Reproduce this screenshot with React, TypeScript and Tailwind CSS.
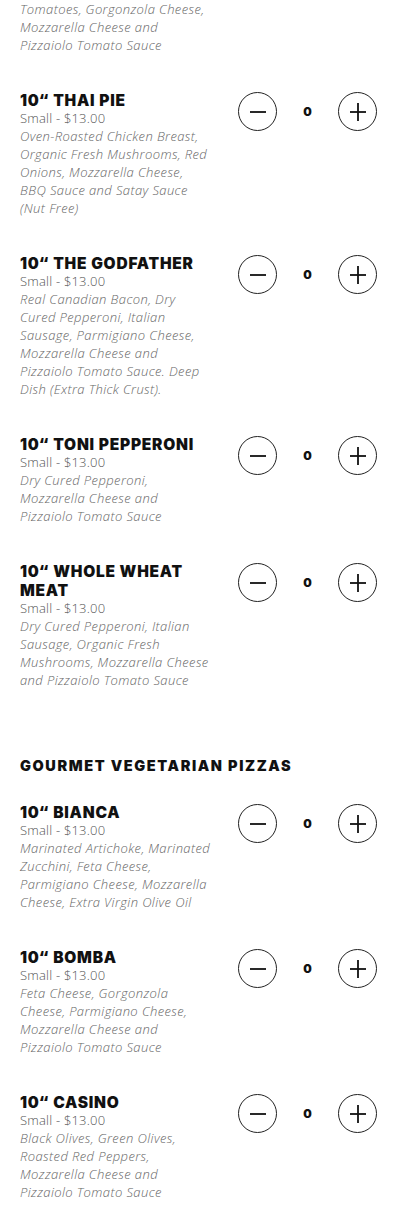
import { useState } from "react";

type Pizza = { name: string; desc: string };

const meat: Pizza[] = [
  {
    name: "10“ THAI PIE",
    desc: "Oven-Roasted Chicken Breast, Organic Fresh Mushrooms, Red Onions, Mozzarella Cheese, BBQ Sauce and Satay Sauce (Nut Free)",
  },
  {
    name: "10“ THE GODFATHER",
    desc: "Real Canadian Bacon, Dry Cured Pepperoni, Italian Sausage, Parmigiano Cheese, Mozzarella Cheese and Pizzaiolo Tomato Sauce. Deep Dish (Extra Thick Crust).",
  },
  {
    name: "10“ TONI PEPPERONI",
    desc: "Dry Cured Pepperoni, Mozzarella Cheese and Pizzaiolo Tomato Sauce",
  },
  {
    name: "10“ WHOLE WHEAT MEAT",
    desc: "Dry Cured Pepperoni, Italian Sausage, Organic Fresh Mushrooms, Mozzarella Cheese and Pizzaiolo Tomato Sauce",
  },
];

const veggie: Pizza[] = [
  {
    name: "10“ BIANCA",
    desc: "Marinated Artichoke, Marinated Zucchini, Feta Cheese, Parmigiano Cheese, Mozzarella Cheese, Extra Virgin Olive Oil",
  },
  {
    name: "10“ BOMBA",
    desc: "Feta Cheese, Gorgonzola Cheese, Parmigiano Cheese, Mozzarella Cheese and Pizzaiolo Tomato Sauce",
  },
  {
    name: "10“ CASINO",
    desc: "Black Olives, Green Olives, Roasted Red Peppers, Mozzarella Cheese and Pizzaiolo Tomato Sauce",
  },
];

function RoundButton({ kind, onClick }: { kind: "minus" | "plus"; onClick: () => void }) {
  return (
    <button
      onClick={onClick}
      className="w-[39px] h-[39px] shrink-0 rounded-full border-[1.3px] border-[#222] flex items-center justify-center"
    >
      <svg width="20" height="20" viewBox="0 0 20 20" fill="none" stroke="#111" strokeWidth="1.8">
        <path d="M2 10h16" />
        {kind === "plus" && <path d="M10 1v18" />}
      </svg>
    </button>
  );
}

function PizzaRow({ pizza }: { pizza: Pizza }) {
  const [qty, setQty] = useState(0);

  return (
    <div className="flex items-start pb-[37px]">
      <div className="w-[218px] shrink-0">
        <h3 className="max-w-[195px] font-['Inter',sans-serif] text-[15.5px] leading-[19px] font-black tracking-[0.05em] text-[#111]">
          {pizza.name}
        </h3>
        <p className="text-[13px] leading-[17px] font-light tracking-[0.2px] text-[#555]">Small - $13.00</p>
        <p className="max-w-[192px] text-[13px] leading-[18px] italic font-light tracking-[0.4px] text-[#666]">
          {pizza.desc}
        </p>
      </div>
      <div className="flex items-center mt-px">
        <RoundButton kind="minus" onClick={() => setQty((q) => Math.max(0, q - 1))} />
        <span className="w-[61px] text-center font-['Inter',sans-serif] text-[12px] font-black text-[#111]">{qty}</span>
        <RoundButton kind="plus" onClick={() => setQty((q) => q + 1)} />
      </div>
    </div>
  );
}

export default function App() {
  return (
    <div className="min-h-screen bg-white pl-5 font-['Open_Sans','Liberation_Sans',sans-serif]">
      <p className="max-w-[192px] text-[13px] leading-[18px] italic font-light tracking-[0.4px] text-[#666]">
        Tomatoes, Gorgonzola Cheese, Mozzarella Cheese and Pizzaiolo Tomato Sauce
      </p>
      <div className="pt-[37px]">
        {meat.map((p) => (
          <PizzaRow key={p.name} pizza={p} />
        ))}
      </div>
      <h2 className="mt-[30px] mb-[27px] font-['Inter',sans-serif] text-[14.5px] leading-[20px] font-black tracking-[0.11em] text-[#111]">
        GOURMET VEGETARIAN PIZZAS
      </h2>
      <div>
        {veggie.map((p) => (
          <PizzaRow key={p.name} pizza={p} />
        ))}
      </div>
    </div>
  );
}
